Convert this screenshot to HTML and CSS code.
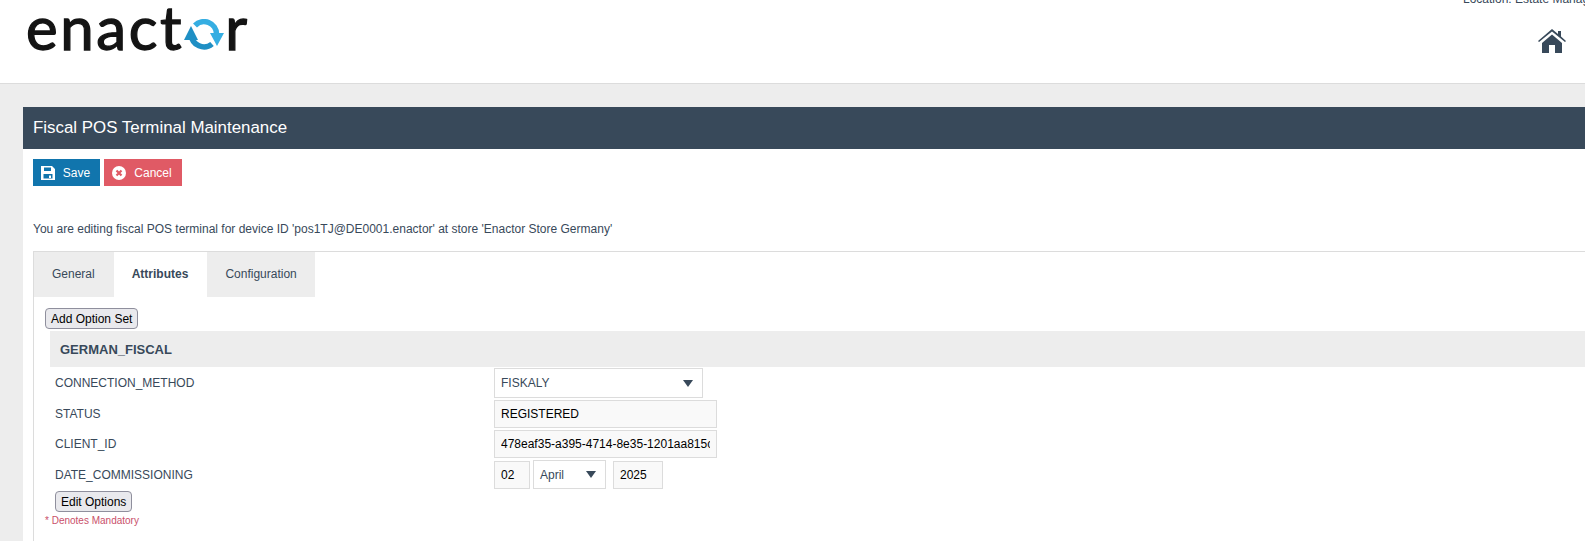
FILE: index.html
```html
<!DOCTYPE html>
<html lang="en">
<head>
<meta charset="utf-8">
<title>Fiscal POS Terminal Maintenance</title>
<link rel="stylesheet" href="styles.css">
</head>
<body>
<header class="top">
  <div class="logo"><span>enact</span><svg class="logo-o" viewBox="0 0 40 32" width="40" height="32"><path d="M11 6.500 A12.500 12.500 0 0 1 32.500 15" fill="none" stroke="#35aee2" stroke-width="5.500"/><path d="M28 25 A12.500 12.500 0 0 1 7.500 16" fill="none" stroke="#1f8fc4" stroke-width="5.500"/><path d="M0 21 L7 7 L14 21Z" fill="#1f8fc4"/><path d="M26 14 L40 14 L33 27Z" fill="#35aee2"/></svg><span>r</span></div>
  <div class="top-right">
    <div class="location">Location: Estate Manager</div>
    <svg class="home" viewBox="0 0 28 26" width="28" height="26"><path d="M0 13 L14 1 L20 6 V3 H23 V8.500 L28 13 L27 14 L14 3.500 L1 14Z" fill="#38495a"/><path d="M4 15 L14 6.500 L24 15 V25 H17 V17 H11 V25 H4Z" fill="#38495a"/></svg>
  </div>
</header>
<main class="panel">
  <h1 class="title">Fiscal POS Terminal Maintenance</h1>
  <div class="content">
    <div class="actions">
      <button class="btn btn-save" type="button"><svg viewBox="0 0 14 14" width="14" height="14"><path fill-rule="evenodd" d="M0 0H11L14 3V14H0ZM3 1.500V5H10V1.500ZM2.500 8V12.500H11.500V8ZM8 12V9.500H10V12Z" fill="#fff"/></svg>Save</button>
      <button class="btn btn-cancel" type="button"><svg viewBox="0 0 14 14" width="14" height="14"><circle cx="7" cy="7" r="7" fill="#fff"/><path d="M4.500 4.500L9.500 9.500M9.500 4.500L4.500 9.500" stroke="#e05a65" stroke-width="2.200"/></svg>Cancel</button>
    </div>
    <p class="intro">You are editing fiscal POS terminal for device ID 'pos1TJ@DE0001.enactor' at store 'Enactor Store Germany'</p>
    <section class="tabbox">
      <nav class="tabs">
        <div class="tab">General</div>
        <div class="tab tab-active">Attributes</div>
        <div class="tab">Configuration</div>
      </nav>
      <div class="tab-body">
        <button class="plain-btn" type="button">Add Option Set</button>
        <h2 class="set-title">GERMAN_FISCAL</h2>
        <div class="row row-first">
          <div class="label">CONNECTION_METHOD</div>
          <div class="select select-wide">FISKALY<i class="caret"></i></div>
        </div>
        <div class="row">
          <div class="label">STATUS</div>
          <div class="field field-wide"><span class="clip">REGISTERED</span></div>
        </div>
        <div class="row">
          <div class="label">CLIENT_ID</div>
          <div class="field field-wide"><span class="clip">478eaf35-a395-4714-8e35-1201aa815c0f</span></div>
        </div>
        <div class="row">
          <div class="label">DATE_COMMISSIONING</div>
          <div class="date">
            <div class="field field-day">02</div>
            <div class="select select-month">April<i class="caret"></i></div>
            <div class="field field-year">2025</div>
          </div>
        </div>
        <button class="plain-btn plain-btn-edit" type="button">Edit Options</button>
        <div class="mandatory">* Denotes Mandatory</div>
      </div>
    </section>
  </div>
</main>
</body>
</html>
```
FILE: styles.css
```css
* { box-sizing: border-box; }
html, body { margin: 0; height: 541px; overflow: hidden; }
body {
  width: 1585px;
  background: #ededed;
  font-family: "Liberation Sans", Arial, sans-serif;
  font-size: 12px;
  color: #38495a;
}
.top {
  height: 84px;
  background: #fff;
  border-bottom: 1px solid #dcdcdc;
  display: flex;
  justify-content: space-between;
  padding-left: 26px;
}
.logo {
  display: flex;
  align-items: flex-start;
  font-family: Lato, sans-serif;
  font-size: 60px;
  line-height: 54px;
  letter-spacing: 2.600px;
  color: #141414;
  -webkit-text-stroke: 1.300px #141414;
}
.logo-o { margin: 19px 1px 0 0; flex: none; }
.top-right { width: 122px; flex: none; overflow: hidden; }
.location {
  white-space: nowrap;
  line-height: 14px;
  margin-top: -8px;
}
.home { display: block; margin: 22px 0 0 75px; }
.panel {
  margin: 23px 0 0 23px;
  width: 1562px;
  height: 434px;
  background: #fff;
}
.title {
  margin: 0;
  height: 42px;
  padding-left: 10px;
  background: #38495a;
  color: #fff;
  font-size: 16.900px;
  font-weight: 400;
  line-height: 41px;
}
.content { padding: 10px 0 0 10px; }
.actions { display: flex; gap: 4px; }
.btn {
  height: 27px;
  border: 0;
  padding: 0;
  color: #fff;
  font: 12px "Liberation Sans", Arial, sans-serif;
  display: flex;
  align-items: center;
  justify-content: center;
  gap: 8px;
}
.btn-save { width: 67px; background: #1175ad; padding-right: 2px; }
.btn-cancel { width: 78px; background: #e05a65; padding-right: 2px; }
.intro { margin: 36px 0 0; line-height: 14px; }
.tabbox {
  margin-top: 15px;
  border-top: 1px solid #dcdcdc;
  border-left: 1px solid #dcdcdc;
  height: 290px;
}
.tabs { display: flex; }
.tab {
  height: 45px;
  line-height: 45px;
  padding: 0 18px;
  background: #ededed;
}
.tab:first-child { padding-right: 19px; }
.tab-active { background: #fff; font-weight: 700; padding: 0 19px 0 18px; }
.tab-body { padding: 11px 0 0 11px; }
.plain-btn {
  display: block;
  height: 21px;
  padding: 0 5px;
  background: #e9e9ed;
  border: 1px solid #8f8f9d;
  border-radius: 4px;
  color: #000;
  font: 12px "Liberation Sans", Arial, sans-serif;
}
.set-title {
  margin: 2px 0 0 5px;
  height: 36px;
  padding-left: 10px;
  background: #ededed;
  font-size: 13px;
  font-weight: 700;
  line-height: 37px;
}
.row { display: flex; align-items: center; height: 30.500px; padding-left: 10px; }
.row-first { margin-top: 1px; }
.label { width: 439px; flex: none; }
.field, .select {
  height: 28px;
  line-height: 26px;
  border: 1px solid #dcdcdc;
  padding: 0 6px;
  flex: none;
}
.field { background: #f9f9f9; color: #000; white-space: nowrap; }
.clip { display: block; overflow: hidden; }
.field-wide { width: 223px; }
.select { background: #fff; display: flex; align-items: center; justify-content: space-between; }
.select-wide { width: 209px; height: 30px; padding-right: 9px; }
.date { display: flex; align-items: center; gap: 3px; }
.field-day { width: 36px; }
.select-month { width: 73px; height: 29px; padding-right: 9px; }
.field-year { width: 50px; margin-left: 4px; }
.caret {
  width: 0;
  height: 0;
  border-left: 5px solid transparent;
  border-right: 5px solid transparent;
  border-top: 7px solid #38495a;
}
.plain-btn-edit { margin: 1px 0 0 10px; }
.mandatory { margin-top: 3px; font-size: 10px; line-height: 12px; color: #c9506a; }
```
